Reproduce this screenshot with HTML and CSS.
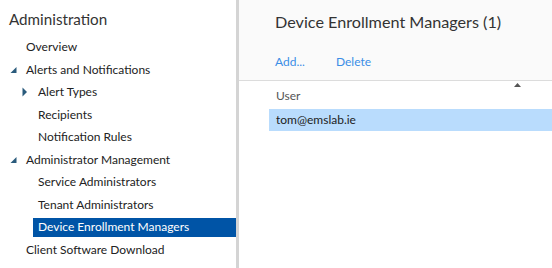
FILE: index.html
```html
<!DOCTYPE html>
<html lang="en">
<head>
    <meta charset="UTF-8">
    <meta name="viewport" content="width=device-width, initial-scale=1.0">
    <title>Administration - Device Enrollment Managers</title>
    <link rel="stylesheet" href="styles.css">
</head>
<body>
    <div class="layout">
        <nav class="sidebar">
            <h1>Administration</h1>
            <ul class="tree">
                <li class="row lvl1"><span class="toggle"></span><span class="label">Overview</span></li>
                <li class="row lvl1">
                    <span class="toggle"><svg width="12" height="12" viewBox="0 0 12 12"><polygon points="7.5,3 7.5,9 1.5,9" class="tri"/></svg></span>
                    <span class="label">Alerts and Notifications</span>
                </li>
                <li class="row lvl2">
                    <span class="toggle"><svg width="12" height="12" viewBox="0 0 12 12"><polygon points="1.5,1.5 6,6 1.5,10.5" class="tri"/></svg></span>
                    <span class="label">Alert Types</span>
                </li>
                <li class="row lvl2"><span class="toggle"></span><span class="label">Recipients</span></li>
                <li class="row lvl2"><span class="toggle"></span><span class="label">Notification Rules</span></li>
                <li class="row lvl1">
                    <span class="toggle"><svg width="12" height="12" viewBox="0 0 12 12"><polygon points="7.5,3 7.5,9 1.5,9" class="tri"/></svg></span>
                    <span class="label">Administrator Management</span>
                </li>
                <li class="row lvl2"><span class="toggle"></span><span class="label">Service Administrators</span></li>
                <li class="row lvl2"><span class="toggle"></span><span class="label">Tenant Administrators</span></li>
                <li class="row lvl2 selected"><span class="toggle"></span><span class="label">Device Enrollment Managers</span></li>
                <li class="row lvl1"><span class="toggle"></span><span class="label">Client Software Download</span></li>
            </ul>
        </nav>

        <main class="content">
            <header class="content-header">
                <h2>Device Enrollment Managers (1)</h2>
                <div class="toolbar">
                    <a href="#">Add...</a>
                    <a href="#">Delete</a>
                </div>
            </header>

            <div class="grid">
                <div class="grid-head">
                    <div class="sort"><svg width="7" height="4" viewBox="0 0 7 4"><polygon points="3.5,0 7,4 0,4" fill="#555"/></svg></div>
                    <div class="col">User</div>
                </div>
                <div class="grid-row selected">tom@emslab.ie</div>
            </div>
        </main>
    </div>
</body>
</html>
```

FILE: styles.css
```css
html, body {
    height: 100%;
}

body {
    font-family: 'Segoe UI', Lato, sans-serif;
    font-size: 12px;
    margin: 0;
    color: #222;
    background-color: #ffffff;
    -webkit-font-smoothing: antialiased;
}

.layout {
    display: flex;
    height: 100%;
}

/* left navigation */

.sidebar {
    width: 236px;
    flex-shrink: 0;
    border-right: 3px solid #d4d4d4;
    background-color: #ffffff;
}

.sidebar h1 {
    margin: 0 0 6px;
    padding: 8px 0 0 9px;
    font-size: 15.2px;
    line-height: 22px;
    font-weight: normal;
    color: #333;
}

.tree {
    list-style: none;
    margin: 0;
    padding: 0;
}

.row {
    display: flex;
    align-items: center;
    height: 22.56px;
}

.lvl1 {
    padding-left: 9px;
}

.lvl2 {
    padding-left: 21px;
}

.toggle {
    width: 12px;
    height: 12px;
    flex-shrink: 0;
}

.toggle svg {
    display: block;
}

.tri {
    fill: #2a5b7c;
}

.label {
    flex: 1;
    padding-left: 5px;
    line-height: 18.5px;
    white-space: nowrap;
}

.row.selected .label {
    background-color: #0054a6;
    color: #ffffff;
}

/* right content */

.content {
    flex: 1;
    display: flex;
    flex-direction: column;
}

.content-header {
    height: 80px;
    background-color: #fafafa;
    border-bottom: 1px solid #dcdcdc;
    padding-left: 36px;
}

.content-header h2 {
    margin: 0;
    padding-top: 10px;
    font-size: 16.2px;
    line-height: 24px;
    font-weight: normal;
    color: #333;
}

.toolbar {
    display: flex;
    gap: 31px;
    margin-top: 19px;
}

.toolbar a {
    color: #3a8ee6;
    text-decoration: none;
    line-height: 18px;
}

.grid {
    margin-left: 30px;
}

.grid-head {
    padding: 2px 0 4px;
}

.sort {
    display: flex;
    justify-content: flex-end;
    padding-right: 31px;
    height: 4px;
}

.sort svg {
    display: block;
}

.col {
    padding-left: 7px;
    line-height: 18px;
    color: #555;
}

.grid-row {
    height: 22px;
    line-height: 22px;
    padding-left: 7px;
}

.grid-row.selected {
    background-color: #b9dcfd;
}
```
